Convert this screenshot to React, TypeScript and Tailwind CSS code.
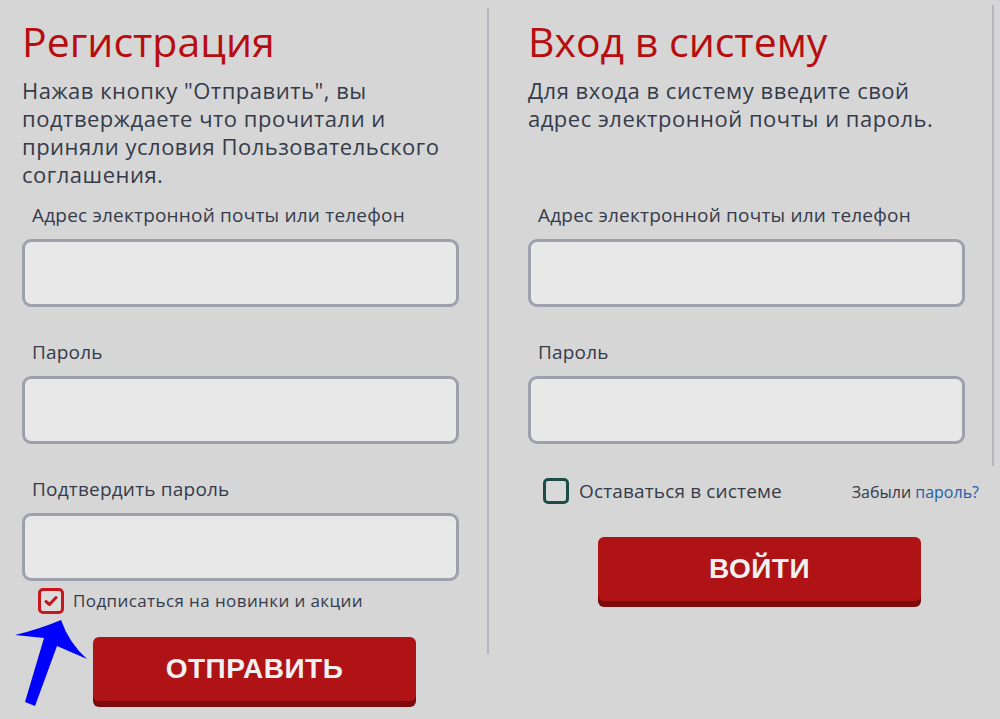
import React from 'react';

const Field = ({ label }: { label: string }) => (
  <div className="flex flex-col">
    <label className="pl-[10px] text-[19px] leading-[24px] tracking-[0.2px] text-[#353b4a]">{label}</label>
    <input
      type="text"
      className="mt-[12px] h-[68px] w-[437px] rounded-[9px] border-[3px] border-[#9fa0ad] bg-[#e8e8e8] outline-none"
    />
  </div>
);

const RedButton = ({ text, className }: { text: string; className: string }) => (
  <button
    className={`h-[64px] w-[323px] rounded-[6px] bg-[#b01316] text-[28px] font-bold tracking-[0.5px] text-[#f1f1f1] shadow-[0_6px_0_#7d0a0c] ${className}`}
    style={{ fontFamily: '"Liberation Sans", Arial, sans-serif' }}
  >
    {text}
  </button>
);

export default function App() {
  return (
    <div
      className="relative flex h-[719px] w-[1000px] overflow-hidden bg-[#d6d6d6]"
      style={{ fontFamily: '"Open Sans", "Noto Sans", sans-serif' }}
    >
      {/* Registration */}
      <section className="w-[487px] shrink-0 pl-[22px] pt-[17px]">
        <div className="h-[186px]">
          <h1 className="text-[41px] leading-[48px] text-[#b70d10]">Регистрация</h1>
          <p className="mt-[11px] w-[440px] text-[22px] leading-[28px] tracking-[0.5px] text-[#353b4a]">
            Нажав кнопку "Отправить", вы подтверждаете что прочитали и приняли условия Пользовательского соглашения.
          </p>
        </div>
        <div className="flex flex-col gap-[33px]">
          <Field label="Адрес электронной почты или телефон" />
          <Field label="Пароль" />
          <Field label="Подтвердить пароль" />
        </div>
        <div className="mt-[7px] flex items-center pl-[16px]">
          <span className="flex h-[26px] w-[26px] items-center justify-center rounded-[5px] border-[3px] border-[#c8171c] bg-[#dcdcdc]">
            <svg width="14" height="12" viewBox="0 0 14 12">
              <path d="M2 6.5 L5.5 9.5 L12 2.5" fill="none" stroke="#c8171c" strokeWidth="3" strokeLinecap="round" strokeLinejoin="round" />
            </svg>
          </span>
          <span className="ml-[9px] text-[17px] leading-[22px] tracking-[0.4px] text-[#353b4a]">Подписаться на новинки и акции</span>
        </div>
        <RedButton text="ОТПРАВИТЬ" className="ml-[71px] mt-[23px]" />
      </section>

      <div className="mt-[8px] h-[646px] w-[2px] shrink-0 bg-[#b6b6c0]" />

      {/* Login */}
      <section className="w-[503px] shrink-0 pl-[39px] pr-[13px] pt-[17px]">
        <div className="h-[186px]">
          <h1 className="text-[41px] leading-[48px] text-[#b70d10]">Вход в систему</h1>
          <p className="mt-[11px] w-[430px] text-[22px] leading-[28px] tracking-[0.5px] text-[#353b4a]">
            Для входа в систему введите свой адрес электронной почты и пароль.
          </p>
        </div>
        <div className="flex flex-col gap-[33px]">
          <Field label="Адрес электронной почты или телефон" />
          <Field label="Пароль" />
        </div>
        <div className="mt-[34px] flex items-center justify-between pl-[15px]">
          <div className="flex items-center">
            <span className="h-[26px] w-[26px] rounded-[5px] border-[3px] border-[#1e4d48] bg-[#d9d9d9]" />
            <span className="ml-[10px] text-[19px] leading-[24px] tracking-[0.15px] text-[#353b4a]">Оставаться в системе</span>
          </div>
          <span className="mt-[2px] text-[16px] leading-[20px] text-[#353b4a]">
            Забыли <a className="text-[#1f5faa]">пароль?</a>
          </span>
        </div>
        <RedButton text="ВОЙТИ" className="ml-[70px] mt-[33px]" />
      </section>

      <div className="mt-[5px] h-[461px] w-[2px] shrink-0 bg-[#b6b6c0]" />

      {/* Annotation arrow */}
      <svg className="absolute left-0 top-[615px]" width="100" height="100" viewBox="0 615 100 100">
        <path d="M61 620 Q40 629 15 635 L44 638 L25 702 L35 706 L57 646 L87 659 Q69 643 61 620 Z" fill="#0000ff" />
      </svg>
    </div>
  );
}
